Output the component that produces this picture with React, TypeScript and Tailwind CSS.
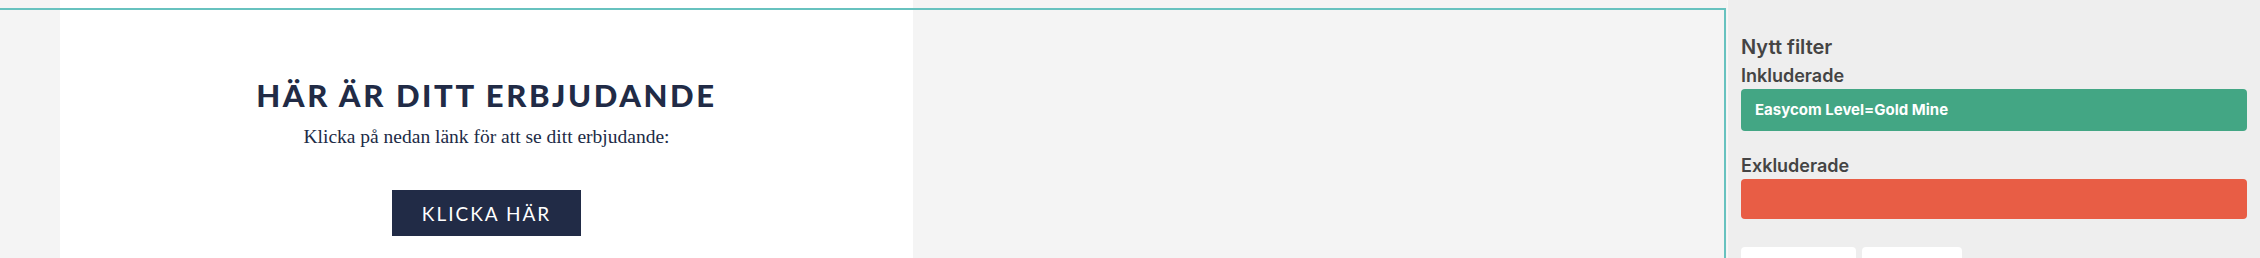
export default function App() {
  return (
    <div className="flex h-[258px] w-[2260px] overflow-hidden bg-[#f4f4f4]">
      {/* email preview canvas */}
      <div className="relative flex h-full w-[1727px] shrink-0">
        <div className="w-[60px] shrink-0" />
        <div className="flex w-[853px] shrink-0 flex-col items-center bg-white text-[#212b46]">
          <h1 className="mt-[75px] shrink-0 font-['Lato',sans-serif] text-[31px] leading-[40px] font-black tracking-[2.6px]">
            HÄR ÄR DITT ERBJUDANDE
          </h1>
          <p className="mt-[10px] shrink-0 font-['Liberation_Serif',serif] text-[19.5px] leading-[24px]">
            Klicka på nedan länk för att se ditt erbjudande:
          </p>
          <button className="mt-[41px] flex h-[46px] w-[189px] shrink-0 items-center justify-center bg-[#212b46] font-['Lato',sans-serif] text-[19px] leading-none tracking-[2px] text-white">
            KLICKA HÄR
          </button>
        </div>
        <div className="flex-1" />
        {/* selection outline */}
        <div className="pointer-events-none absolute top-[8px] right-[1px] -bottom-[10px] -left-[4px] border-2 border-[#67c2bf]" />
      </div>

      {/* filter sidebar */}
      <aside className="flex h-full flex-1 flex-col border-l border-[#f8f8f8] bg-[#eeeeee] px-[13px] pt-[35px] font-['Inter',sans-serif] text-[#444]">
        <h2 className="shrink-0 text-[20px] leading-[24px] font-semibold">Nytt filter</h2>
        <div className="mt-[6px] shrink-0 text-[18px] leading-[22px] font-semibold">Inkluderade</div>
        <div className="mt-[2px] flex h-[42px] shrink-0 items-center rounded-[4px] bg-[#43a684] px-[14px] text-[15px] font-bold text-white">
          Easycom Level=Gold Mine
        </div>
        <div className="mt-[24px] shrink-0 text-[18px] leading-[22px] font-semibold">Exkluderade</div>
        <div className="mt-[2px] h-[40px] shrink-0 rounded-[4px] bg-[#e85d45]" />
        <div className="mt-[28px] flex shrink-0 gap-[6px]">
          <div className="h-[36px] w-[115px] rounded-[4px] bg-white" />
          <div className="h-[36px] w-[100px] rounded-[4px] bg-white" />
        </div>
      </aside>
    </div>
  )
}
